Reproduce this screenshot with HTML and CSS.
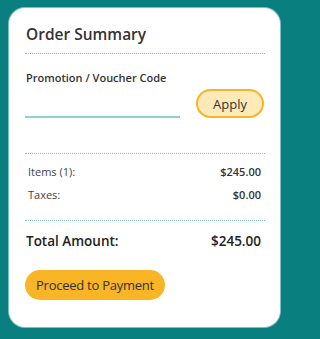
FILE: index.html
```html
<!DOCTYPE html>
<html lang="en">
<head>
<meta charset="utf-8">
<title>Order Summary</title>
<link rel="stylesheet" href="styles.css">
</head>
<body>
<div class="card">
  <h2 class="title">Order Summary</h2>
  <div class="divider"></div>
  <label class="label" for="code">Promotion / Voucher Code</label>
  <div class="promo-row">
    <input id="code" class="code-input" type="text">
    <button class="apply-btn" type="button">Apply</button>
  </div>
  <div class="divider divider-mid"></div>
  <div class="lines">
    <div class="line"><span class="line-name">Items (1):</span><span class="line-value">$245.00</span></div>
    <div class="line"><span class="line-name">Taxes:</span><span class="line-value">$0.00</span></div>
  </div>
  <div class="divider divider-low"></div>
  <div class="total"><span>Total Amount:</span><span>$245.00</span></div>
  <button class="pay-btn" type="button">Proceed to Payment</button>
</div>
</body>
</html>
```

FILE: styles.css
```css
html, body {
  margin: 0;
  padding: 0;
}
html {
  background: #0a7f80;
}
body {
  background: #0a7f80;
  font-family: "Open Sans", "Noto Sans", sans-serif;
  color: #333;
  padding: 8px 0 0 9px;
  height: 339px;
  box-sizing: border-box;
}
.card {
  background: #fff;
  border-radius: 16px;
  width: 271px;
  height: 319px;
  box-sizing: border-box;
  padding: 13.5px 15px 0 16px;
  box-shadow: 0 0 0 1px rgba(200, 235, 235, 0.6);
}
.title {
  margin: 0;
  font-size: 15.5px;
  line-height: 24px;
  font-weight: 600;
  color: #333;
  padding-left: 1px;
}
.divider {
  border-top: 1px dotted #7fbfc0;
  margin-top: 7.5px;
}
.label {
  display: block;
  margin-top: 16px;
  font-size: 11px;
  line-height: 16px;
  font-weight: 600;
  color: #333;
  padding-left: 1px;
}
.promo-row {
  display: flex;
  align-items: flex-end;
  gap: 16px;
  margin-top: 3px;
  padding-right: 1px;
}
.code-input {
  flex: 1;
  min-width: 0;
  border: none;
  border-bottom: 2px solid #8fcfd0;
  height: 24px;
  padding: 0;
  margin-bottom: 0;
  outline: none;
  background: transparent;
  font-family: inherit;
}
.apply-btn {
  width: 68px;
  height: 29px;
  box-sizing: border-box;
  border: 2px solid #f5b52a;
  background: #feeab6;
  border-radius: 15px;
  font-family: inherit;
  font-size: 13px;
  color: #333;
  padding: 0;
  cursor: pointer;
}
.divider-mid {
  margin-top: 35px;
}
.lines {
  padding: 10px 4px 0 3px;
  display: flex;
  flex-direction: column;
  gap: 7px;
}
.line {
  display: flex;
  justify-content: space-between;
  font-size: 11px;
  line-height: 16px;
  color: #444;
}
.line-value {
  font-weight: 600;
  color: #333;
}
.divider-low {
  margin-top: 17px;
}
.total {
  display: flex;
  justify-content: space-between;
  margin-top: 10px;
  padding: 0 4px 0 1px;
  font-size: 13.5px;
  line-height: 20px;
  font-weight: 600;
  color: #222;
}
.pay-btn {
  display: block;
  margin-top: 19px;
  height: 30px;
  padding: 0 11px;
  border: none;
  border-radius: 15px;
  background: #f8b526;
  font-family: inherit;
  font-size: 13px;
  letter-spacing: -0.25px;
  color: #333;
  cursor: pointer;
}
```
